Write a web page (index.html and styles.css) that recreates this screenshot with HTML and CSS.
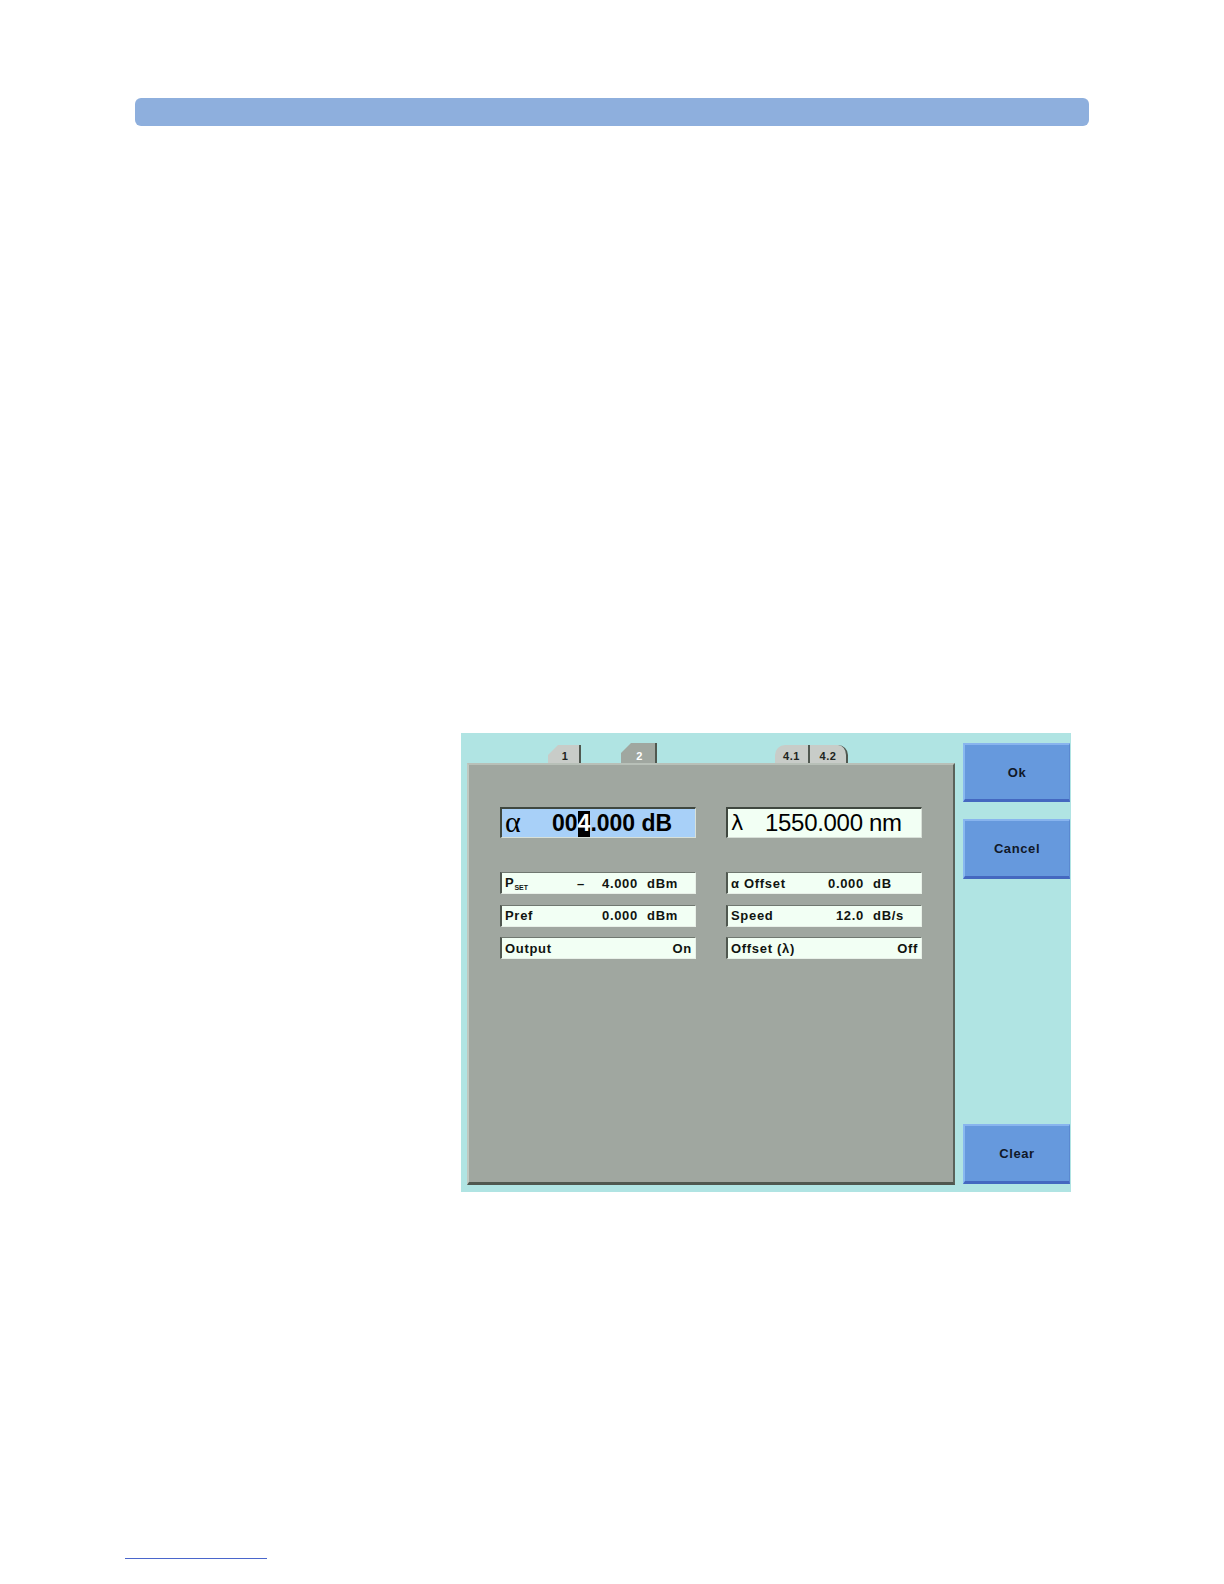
FILE: index.html
```html
<!DOCTYPE html>
<html>
<head>
<meta charset="utf-8">
<link rel="stylesheet" href="styles.css">
</head>
<body>
<div class="header-bar"></div>
<div class="screen">
  <div class="main-col">
    <div class="tabs">
      <div class="tab tab-1">1</div>
      <div class="tab tab-2">2</div>
      <div class="tab tab-41">4.1</div>
      <div class="tab tab-42">4.2</div>
    </div>
    <div class="panel">
      <div class="big-row">
        <div class="big-field alpha"><span class="sym">&alpha;</span><span class="big-val">00<span class="cursor">4</span>.000 dB</span></div>
        <div class="big-field lambda"><span class="sym lam">&lambda;</span><span class="big-val reg">1550.000 nm</span></div>
      </div>
      <div class="small-grid">
        <div class="field"><span class="lbl">P<sub>SET</sub></span><span class="minus">&ndash;</span><span class="val">4.000</span><span class="unit">dBm</span></div>
        <div class="field"><span class="lbl">&alpha; Offset</span><span class="val">0.000</span><span class="unit">dB</span></div>
        <div class="field"><span class="lbl">Pref</span><span class="val">0.000</span><span class="unit">dBm</span></div>
        <div class="field"><span class="lbl">Speed</span><span class="val">12.0</span><span class="unit">dB/s</span></div>
        <div class="field"><span class="lbl">Output</span><span class="state">On</span></div>
        <div class="field"><span class="lbl">Offset (&lambda;)</span><span class="state">Off</span></div>
      </div>
    </div>
  </div>
  <div class="btn-col">
    <div class="btn">Ok</div>
    <div class="btn btn-cancel">Cancel</div>
    <div class="btn btn-clear">Clear</div>
  </div>
</div>
<div class="foot-line"></div>
</body>
</html>
```

FILE: styles.css
```css
html, body {
  margin: 0;
  padding: 0;
  background: #ffffff;
}
body {
  display: flow-root;
  overflow: hidden;
  font-family: "Liberation Sans", Arial, sans-serif;
}
.header-bar {
  margin: 98px 0 0 135px;
  width: 954px;
  height: 28px;
  background: #8eafdd;
  border-radius: 6px;
}
.screen {
  margin: 607px 0 0 461px;
  width: 610px;
  height: 459px;
  background: #b0e4e3;
  display: flex;
  box-sizing: border-box;
}
.main-col {
  margin-left: 6px;
  width: 488px;
  display: flex;
  flex-direction: column;
}
.tabs {
  height: 30px;
  position: relative;
}
.tab {
  position: absolute;
  bottom: 0;
  font-size: 11px;
  font-weight: bold;
  color: #202420;
  text-align: center;
  box-sizing: border-box;
  letter-spacing: 0.6px;
}
.tab-1 {
  left: 81px;
  width: 33px;
  height: 18px;
  line-height: 22px;
  background: #c8ccc8;
  border-right: 2px solid #505850;
  clip-path: polygon(10px 0, 100% 0, 100% 100%, 0 100%, 0 10px);
  padding-left: 3px;
}
.tab-2 {
  left: 154px;
  width: 36px;
  height: 20px;
  line-height: 26px;
  background: #a0a7a0;
  color: #ffffff;
  border-right: 2px solid #505850;
  clip-path: polygon(10px 0, 100% 0, 100% 100%, 0 100%, 0 10px);
  padding-left: 3px;
}
.tab-41 {
  left: 308px;
  width: 35px;
  height: 18px;
  line-height: 22px;
  background: #c8ccc8;
  border-right: 2px solid #505850;
  border-top-left-radius: 10px;
}
.tab-42 {
  left: 343px;
  width: 38px;
  height: 18px;
  line-height: 22px;
  background: #c8ccc8;
  border-right: 2px solid #505850;
  border-top-right-radius: 10px;
}
.panel {
  height: 422px;
  background: #a0a7a0;
  box-sizing: border-box;
  border-top: 2px solid #b8c0b8;
  border-left: 2px solid #c0c8c0;
  border-right: 2px solid #5a625a;
  border-bottom: 3px solid #505850;
  padding: 42px 0 0 31px;
}
.big-row {
  display: flex;
  gap: 30px;
}
.big-field {
  width: 196px;
  height: 31px;
  box-sizing: border-box;
  border-top: 2px solid #404840;
  border-left: 2px solid #404840;
  border-right: 1px solid #d8e0d8;
  border-bottom: 1px solid #d8e0d8;
  display: flex;
  align-items: center;
  color: #000000;
}
.alpha {
  background: #a8d0f8;
}
.lambda {
  background: #f2fff4;
}
.sym {
  font-family: "Liberation Serif", "Times New Roman", serif;
  font-size: 30px;
  width: 50px;
  padding-left: 3px;
  box-sizing: border-box;
  line-height: 1;
  margin-top: -3px;
}
.sym.lam {
  font-family: "DejaVu Sans", sans-serif;
  font-size: 21px;
  width: 37px;
  margin-top: 0;
}
.big-val {
  font-size: 23px;
  font-weight: bold;
  white-space: pre;
  line-height: 1;
}
.big-val.reg {
  font-weight: normal;
  font-size: 24px;
  letter-spacing: -0.3px;
}
.cursor {
  background: #000000;
  color: #ffffff;
  display: inline-block;
  padding: 1px 0 2px;
  margin: -1px 0 -2px;
}
.small-grid {
  margin-top: 34px;
  display: grid;
  grid-template-columns: 196px 196px;
  column-gap: 30px;
  row-gap: 10.5px;
}
.field {
  height: 22px;
  box-sizing: border-box;
  background: #f2fff4;
  border-left: 2px solid #505850;
  border-top: 1px solid #707870;
  border-right: 1px solid #e8f0e8;
  border-bottom: 1px solid #e8f0e8;
  display: flex;
  align-items: center;
  font-size: 13px;
  font-weight: bold;
  letter-spacing: 0.7px;
  color: #101410;
  padding-left: 3px;
}
.lbl {
  flex: 1;
  white-space: pre;
}
.lbl sub {
  font-size: 7px;
  letter-spacing: 0;
  vertical-align: -3px;
}
.minus {
  margin-right: 17px;
}
.val {
  text-align: right;
}
.unit {
  width: 48px;
  margin-left: 9px;
}
.state {
  padding-right: 3px;
}
.btn-col {
  margin-left: 8px;
  width: 107px;
  display: flex;
  flex-direction: column;
  padding: 10px 0 8px;
  box-sizing: border-box;
}
.btn {
  height: 59px;
  box-sizing: border-box;
  background: #6699dd;
  border-top: 2px solid #88b4ee;
  border-left: 2px solid #88b8f0;
  border-bottom: 3px solid #4468c0;
  border-right: 1px solid #5a88d0;
  display: flex;
  align-items: center;
  justify-content: center;
  font-size: 13px;
  font-weight: bold;
  letter-spacing: 0.6px;
  color: #101828;
}
.btn-cancel {
  margin-top: 17px;
  height: 60px;
}
.btn-clear {
  margin-top: auto;
  height: 60px;
}
.foot-line {
  margin: 366px 0 0 125px;
  width: 142px;
  height: 1px;
  background: #4a66cc;
}
```
